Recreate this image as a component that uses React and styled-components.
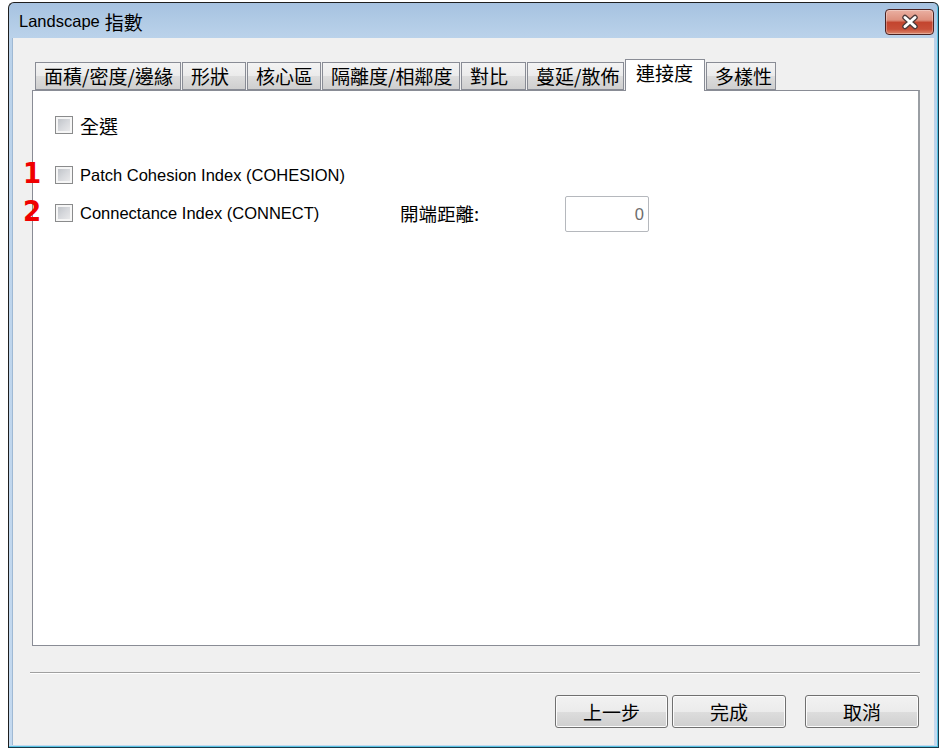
import React from 'react';
import styled, { createGlobalStyle } from 'styled-components';

const Global = createGlobalStyle`
  html, body { margin: 0; padding: 0; background: #fff; }
  body { font-family: "Liberation Sans", "Noto Sans CJK TC", sans-serif; color: #000; }
  * { box-sizing: border-box; }
`;

const CJK = `"Noto Sans CJK TC", "Liberation Sans", sans-serif`;

const Page = styled.div`
  width: 940px;
  height: 749px;
  padding: 2px 1px 1px 8px;
`;

const Window = styled.div`
  height: 100%;
  display: flex;
  flex-direction: column;
  border: 1px solid #1e1e1e;
  border-right-color: #17394a;
  border-bottom-color: #17394a;
  border-radius: 6px 6px 0 0;
  background: linear-gradient(#a6c2e0 0px, #bad2ea 34px, #c4d9ef 100%);
  box-shadow: inset -1px -1px 0 #58c3e3;
`;

const TitleBar = styled.div`
  height: 35px;
  flex: none;
  display: flex;
  align-items: center;
  justify-content: space-between;
  padding: 1px 4px 0 10px;
`;

const Title = styled.div`
  font-size: 16.5px;
  color: #000;
  display: flex;
  align-items: center;
`;

const TitleHan = styled.span`
  font-family: ${CJK};
  font-size: 19px;
  margin-left: 5px;
`;

const CloseButton = styled.div`
  width: 49px;
  height: 26px;
  margin-top: 2px;
  border: 1px solid #4a2222;
  border-radius: 4px;
  background: linear-gradient(#eab0a2 0%, #dd907e 42%, #c3452f 52%, #c84f38 80%, #dc8a70 100%);
  box-shadow: inset 0 0 0 1px rgba(255, 255, 255, 0.3);
  display: flex;
  align-items: center;
  justify-content: center;
`;

const Client = styled.div`
  flex: 1;
  margin: 0 4px 2px 4px;
  background: #f0f0f0;
  display: flex;
  flex-direction: column;
  padding-top: 21px;
  box-shadow: -1px 0 0 #9fb9d4;
`;

const TabRow = styled.div`
  display: flex;
  align-items: flex-end;
  height: 31px;
  margin-left: 22px;
  position: relative;
  z-index: 1;
`;

const Tab = styled.div`
  flex: none;
  height: ${p => (p.$active ? 32 : 28)}px;
  margin-right: 1px;
  margin-bottom: ${p => (p.$active ? -1 : 0)}px;
  border: 1px solid #898c95;
  border-bottom: ${p => (p.$active ? 'none' : '1px solid #898c95')};
  background: ${p =>
    p.$active ? '#fff' : 'linear-gradient(#f3f3f3 0%, #ebebeb 50%, #dddddd 51%, #cfcfcf 100%)'};
  font-family: ${CJK};
  font-size: 19px;
  line-height: ${p => (p.$active ? 26 : 26)}px;
  padding-left: ${p => (p.$active ? 10 : 8)}px;
  white-space: nowrap;
  color: #000;
`;

const Panel = styled.div`
  height: 556px;
  margin: 0 14px 0 19px;
  border: 1px solid #898c95;
  border-right: 2px solid #9a9ea3;
  background: #fff;
  padding: 15px 0 0 22px;
  display: flex;
  flex-direction: column;
`;

const Row = styled.div`
  position: relative;
  height: 38px;
  display: flex;
  align-items: center;
  margin-top: ${p => p.$gap || 0}px;
`;

const CheckItem = styled.label`
  display: flex;
  align-items: center;
  gap: 7px;
  width: ${p => (p.$width ? `${p.$width}px` : 'auto')};
  flex: none;
`;

const Box = styled.span`
  width: 18px;
  height: 18px;
  flex: none;
  border: 1px solid #8a8b8c;
  background: linear-gradient(135deg, #b9bdc3 0%, #d6d8dc 50%, #eeeeef 100%);
  box-shadow: inset 0 0 0 2px #f6f6f6;
`;

const Label = styled.span`
  font-size: ${p => (p.$han ? 19 : 16.5)}px;
  font-family: ${p => (p.$han ? CJK : '"Liberation Sans", sans-serif')};
  color: #000;
  white-space: nowrap;
`;

const FieldLabel = styled.span`
  width: 165px;
  flex: none;
  font-family: ${CJK};
  font-size: 18.5px;
  color: #000;
`;

const NumberField = styled.div`
  width: 84px;
  height: 36px;
  border: 1px solid #b5b8bd;
  border-radius: 2px;
  background: #fff;
  display: flex;
  align-items: center;
  justify-content: flex-end;
  padding-right: 4px;
  font-size: 16.5px;
  color: #6d6d6d;
  margin-top: 2px;
`;

const Marker = styled.span`
  position: absolute;
  left: -32px;
  top: 3px;
  font-family: "DejaVu Sans Condensed", "DejaVu Sans", sans-serif;
  font-weight: bold;
  font-size: 29px;
  line-height: 1;
  color: #f00000;
`;

const Separator = styled.div`
  margin: 26px 14px 0 17px;
  border-top: 1px solid #a0a0a0;
  border-bottom: 1px solid #fff;
`;

const ButtonRow = styled.div`
  display: flex;
  justify-content: flex-end;
  margin-top: 21px;
  padding-right: 15px;
`;

const Button = styled.div`
  width: ${p => p.$width || 114}px;
  height: 33px;
  margin-left: ${p => p.$gap || 0}px;
  border: 1px solid #707070;
  border-radius: 3px;
  background: linear-gradient(#f2f2f2 0%, #ebebeb 50%, #dddddd 51%, #cfcfcf 100%);
  box-shadow: inset 0 0 0 1px #fcfcfc;
  display: flex;
  align-items: center;
  justify-content: center;
  font-family: ${CJK};
  font-size: 19px;
  color: #000;
`;

const tabs = [
  { label: '面積/密度/邊緣', width: 146 },
  { label: '形狀', width: 64 },
  { label: '核心區', width: 74 },
  { label: '隔離度/相鄰度', width: 138 },
  { label: '對比', width: 65 },
  { label: '蔓延/散佈', width: 97 },
  { label: '連接度', width: 80, active: true },
  { label: '多樣性', width: 70 },
];

function CloseIcon() {
  return (
    <svg width="22" height="16" viewBox="0 0 22 16">
      <path d="M6 3.5 L16 12.5 M16 3.5 L6 12.5" stroke="#4b3a3a" strokeWidth="5.5" strokeLinecap="round" />
      <path d="M6 3.5 L16 12.5 M16 3.5 L6 12.5" stroke="#ffffff" strokeWidth="3" strokeLinecap="round" />
    </svg>
  );
}

export default function App() {
  return (
    <>
      <Global />
      <Page>
        <Window>
          <TitleBar>
            <Title>
              Landscape<TitleHan>指數</TitleHan>
            </Title>
            <CloseButton>
              <CloseIcon />
            </CloseButton>
          </TitleBar>
          <Client>
            <TabRow>
              {tabs.map(t => (
                <Tab key={t.label} $active={t.active} style={{ width: t.width }}>
                  {t.label}
                </Tab>
              ))}
            </TabRow>
            <Panel>
              <Row>
                <CheckItem>
                  <Box />
                  <Label $han>全選</Label>
                </CheckItem>
              </Row>
              <Row $gap={12}>
                <Marker>1</Marker>
                <CheckItem>
                  <Box />
                  <Label>Patch Cohesion Index (COHESION)</Label>
                </CheckItem>
              </Row>
              <Row>
                <Marker>2</Marker>
                <CheckItem $width={345}>
                  <Box />
                  <Label>Connectance Index (CONNECT)</Label>
                </CheckItem>
                <FieldLabel>開端距離:</FieldLabel>
                <NumberField>0</NumberField>
              </Row>
            </Panel>
            <Separator />
            <ButtonRow>
              <Button $width={113}>上一步</Button>
              <Button $gap={4}>完成</Button>
              <Button $gap={19}>取消</Button>
            </ButtonRow>
          </Client>
        </Window>
      </Page>
    </>
  );
}
